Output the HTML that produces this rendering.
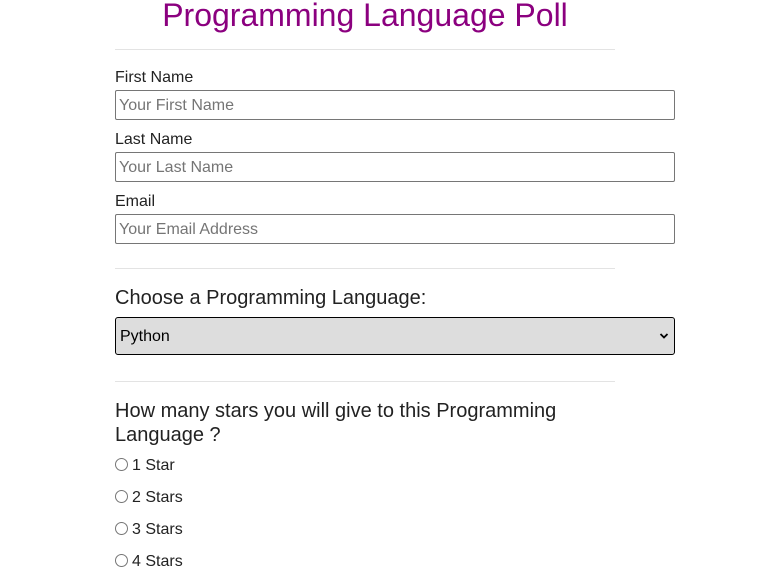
<!DOCTYPE html>
<html><head><style>
body{margin:0;background:#fff;font-family:"Liberation Sans",sans-serif;color:#222;}
.a{position:absolute;white-space:nowrap}
h1{position:absolute;left:0;width:730px;top:-4px;margin:0;text-align:center;font-weight:normal;font-size:32px;color:#8b007f;line-height:38px}
.hr{position:absolute;left:115px;width:500px;height:1px;background:#e3e3e3}
.lbl{position:absolute;left:115px;font-size:16px;line-height:18px;color:#222}
.inp{position:absolute;left:115px;width:558px;height:28px;border:1px solid #767676;border-radius:2px;font-size:16px;color:#757575;line-height:28px;box-sizing:content-box}
.inp span{position:absolute;left:3px;top:1px}
.radio{position:absolute;left:115px;width:11px;height:11px;border:1px solid #767676;border-radius:50%}
.rl{position:absolute;left:132px;font-size:16px;line-height:18px}
</style></head><body>
<h1>Programming Language Poll</h1>
<div class="hr" style="top:49px"></div>
<div class="lbl" style="top:69px">First Name</div>
<div class="inp" style="top:90px"><span>Your First Name</span></div>
<div class="lbl" style="top:131px">Last Name</div>
<div class="inp" style="top:152px"><span>Your Last Name</span></div>
<div class="lbl" style="top:193px">Email</div>
<div class="inp" style="top:214px"><span>Your Email Address</span></div>
<div class="hr" style="top:268px"></div>
<div class="a" style="left:115px;top:287px;font-size:20px;line-height:23px">Choose a Programming Language:</div>
<div style="position:absolute;left:115px;top:317px;width:558px;height:36px;background:#ddd;border:1px solid #000;border-radius:3px">
<span class="a" style="left:4px;top:10px;font-size:16px;color:#000">Python</span>
<svg style="position:absolute;right:5px;top:14px" width="10" height="8" viewBox="0 0 10 8"><path d="M1.5 2 L5 5.5 L8.5 2" fill="none" stroke="#000" stroke-width="1.8"/></svg>
</div>
<div class="hr" style="top:381px"></div>
<div style="position:absolute;left:115px;top:399px;width:500px;font-size:20px;line-height:24px">How many stars you will give to this Programming Language ?</div>
<div class="radio" style="top:458px"></div><div class="rl" style="top:457px">1 Star</div>
<div class="radio" style="top:490px"></div><div class="rl" style="top:489px">2 Stars</div>
<div class="radio" style="top:522px"></div><div class="rl" style="top:521px">3 Stars</div>
<div class="radio" style="top:554px"></div><div class="rl" style="top:553px">4 Stars</div>
</body></html>
